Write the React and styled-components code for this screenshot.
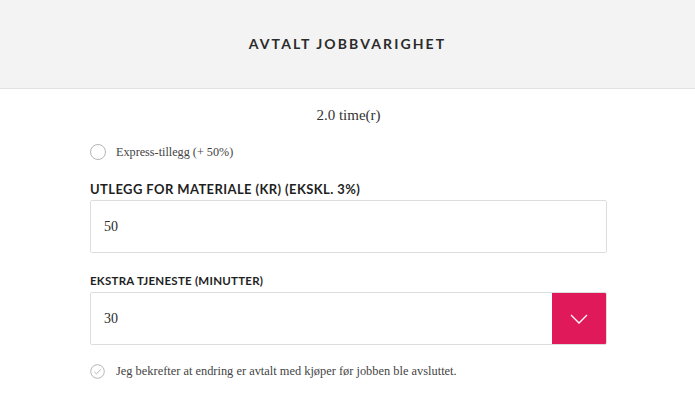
import React, { useState } from "react";
import styled, { createGlobalStyle } from "styled-components";

const GlobalStyle = createGlobalStyle`
    body {
        margin: 0;
        background: #ffffff;
        font-family: "Liberation Serif", serif;
        color: #333333;
    }
`;

const App = () => {
    const [express, setExpress] = useState(false);
    const [material, setMaterial] = useState('50');
    const [extra, setExtra] = useState('30');
    const [confirmed, setConfirmed] = useState(false);

    return (
        <>
            <GlobalStyle />
            <Header>
                <h1>AVTALT JOBBVARIGHET</h1>
            </Header>
            <Content>
                <Duration>2.0 time(r)</Duration>

                <OptionRow top={19} onClick={() => setExpress(!express)}>
                    <Radio checked={express}></Radio>
                    <span>Express-tillegg (+ 50%)</span>
                </OptionRow>

                <Field top={22}>
                    <Label>UTLEGG FOR MATERIALE (KR) (EKSKL. 3%)</Label>
                    <InputBox>
                        <input value={material} onChange={(e) => setMaterial(e.target.value)}></input>
                    </InputBox>
                </Field>

                <Field top={21}>
                    <Label small>EKSTRA TJENESTE (MINUTTER)</Label>
                    <InputBox>
                        <select value={extra} onChange={(e) => setExtra(e.target.value)}>
                            <option value="0">0</option>
                            <option value="15">15</option>
                            <option value="30">30</option>
                            <option value="45">45</option>
                            <option value="60">60</option>
                        </select>
                        <SelectButton>
                            <svg width="18" height="10" viewBox="0 0 18 10" fill="none">
                                <path d="M1 1L9 9L17 1" stroke="#ffffff" strokeWidth="1.3" />
                            </svg>
                        </SelectButton>
                    </InputBox>
                </Field>

                <OptionRow top={19} wide onClick={() => setConfirmed(!confirmed)}>
                    <CheckCircle>
                        <svg width="15" height="15" viewBox="0 0 15 15" fill="none">
                            <circle cx="7.5" cy="7.5" r="6.8" stroke="#b5b5b5" strokeWidth="1" />
                            <path d="M4.3 7.8L6.5 9.9L10.8 5.4" stroke={confirmed ? '#e0195a' : '#b5b5b5'} strokeWidth="1" />
                        </svg>
                    </CheckCircle>
                    <span>Jeg bekrefter at endring er avtalt med kjøper før jobben ble avsluttet.</span>
                </OptionRow>
            </Content>
        </>
    );
};

const Header = styled.div`
    height: 89px;
    background-color: #f3f3f3;
    border-bottom: 1px solid #e2e2e2;
    display: flex;
    align-items: center;
    justify-content: center;
    padding-bottom: 1px;
    box-sizing: border-box;
    h1 {
        margin: 0;
        font-family: "Lato", sans-serif;
        font-weight: 700;
        font-size: 14px;
        letter-spacing: 2.1px;
        color: #2b2b2b;
    }
`;

const Content = styled.div`
    width: 517px;
    margin-left: 90px;
    padding-top: 16px;
    display: flex;
    flex-direction: column;
`;

const Duration = styled.p`
    margin: 0;
    text-align: center;
    font-size: 15px;
    line-height: 20px;
    color: #333333;
`;

const OptionRow = styled.div`
    display: flex;
    align-items: center;
    gap: ${p => p.wide ? '11px' : '10px'};
    font-size: ${p => p.wide ? '12.4px' : '12.2px'};
    color: #444444;
    margin-top: ${p => p.top}px;
    cursor: pointer;
    user-select: none;
`;

const Radio = styled.span`
    box-sizing: border-box;
    width: 16px;
    height: 16px;
    border-radius: 50%;
    border: 1px solid #b5b5b5;
    flex-shrink: 0;
    background-color: ${p => p.checked ? '#e0195a' : 'white'};
    box-shadow: ${p => p.checked ? 'inset 0 0 0 3px white' : 'none'};
`;

const CheckCircle = styled.span`
    display: flex;
    width: 15px;
    height: 15px;
    flex-shrink: 0;
`;

const Field = styled.div`
    margin-top: ${p => p.top}px;
    display: flex;
    flex-direction: column;
    gap: 4px;
`;

const Label = styled.div`
    font-family: "Lato", sans-serif;
    font-weight: 700;
    font-size: ${p => p.small ? '11.5px' : '13px'};
    letter-spacing: ${p => p.small ? '0.25px' : '0.4px'};
    color: #1f1f1f;
    line-height: 14px;
`;

const InputBox = styled.div`
    box-sizing: border-box;
    height: 53px;
    border: 1px solid #dddddd;
    border-radius: 2px;
    display: flex;
    align-items: stretch;
    overflow: hidden;
    input, select {
        flex: 1;
        border: 0;
        outline: 0;
        padding: 0 13px;
        font-family: "Liberation Serif", serif;
        font-size: 14px;
        color: #2b2b2b;
        background: white;
        appearance: none;
    }
`;

const SelectButton = styled.div`
    width: 54px;
    background-color: #e0195a;
    display: flex;
    align-items: center;
    justify-content: center;
    pointer-events: none;
`;

export default App;
